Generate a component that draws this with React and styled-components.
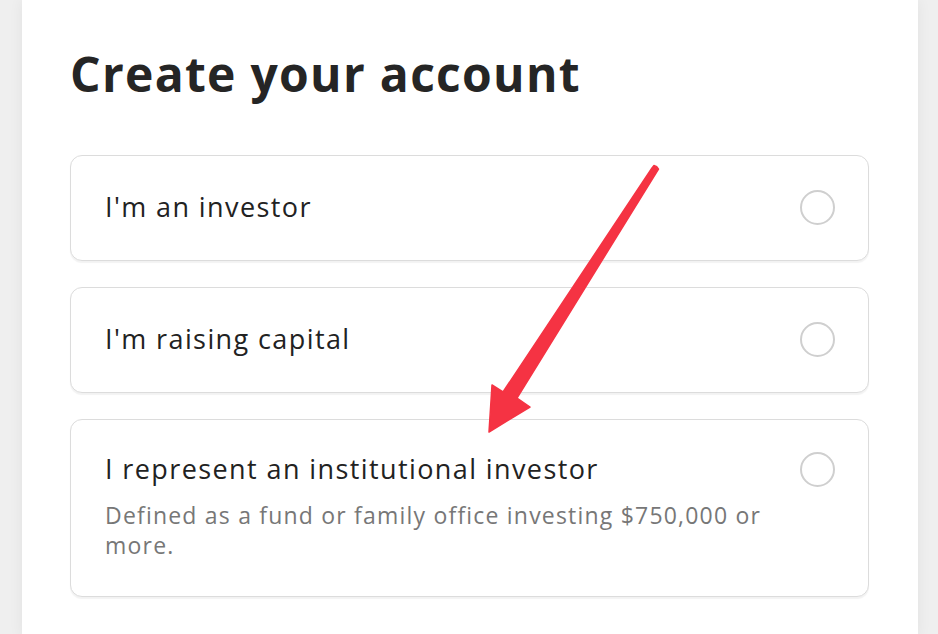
import React from 'react';
import styled, {createGlobalStyle} from 'styled-components';

const GlobalStyle = createGlobalStyle`
  html, body {
    margin: 0;
    padding: 0;
    background: #efefef;
  }
  body {
    font-family: "Open Sans", "Liberation Sans", sans-serif;
    color: #222;
  }
`;

const Page = styled.div`
  display: flex;
  justify-content: center;
  min-height: 634px;
  padding: 0 20px 0 22px;
  overflow: hidden;
`;

const Card = styled.div`
  position: relative;
  flex: 1;
  background: #fff;
  box-shadow: 0 0 14px rgba(0, 0, 0, 0.06);
  padding: 43px 49px 40px 48px;
`;

const Title = styled.h1`
  margin: 0 0 50px;
  font-size: 48px;
  font-weight: 700;
  line-height: 62px;
  color: #252525;
  letter-spacing: 1.3px;
`;

const OptionList = styled.div`
  display: flex;
  flex-direction: column;
  gap: 26px;
`;

const Option = styled.label`
  display: flex;
  align-items: flex-start;
  gap: 20px;
  min-height: ${props => props.$tall ? 178 : 106}px;
  box-sizing: border-box;
  padding: ${props => props.$tall ? '31px' : '33px'} 33px 24px 34px;
  border: 1.5px solid #dcdcdc;
  border-radius: 12px;
  box-shadow: 0 1.5px 1px rgba(0, 0, 0, 0.05);
  background: #fff;
  cursor: pointer;
`;

const OptionBody = styled.div`
  flex: 1;
  display: flex;
  flex-direction: column;
  gap: 13px;
`;

const OptionTitle = styled.div`
  font-size: 27px;
  line-height: 36px;
  letter-spacing: 1.4px;
  color: #222;
`;

const OptionNote = styled.div`
  font-size: 23px;
  line-height: 30px;
  letter-spacing: 1.2px;
  color: #777;
  max-width: 700px;
`;

const Radio = styled.span`
  flex: none;
  box-sizing: border-box;
  width: 35px;
  height: 35px;
  margin-top: 1px;
  border: 2px solid #cfcfcf;
  border-radius: 50%;
  background: #fff;
`;

const Arrow = styled.svg`
  position: absolute;
  left: 0;
  top: 0;
  pointer-events: none;
`;

const options = [
  {title: "I'm an investor"},
  {title: "I'm raising capital"},
  {
    title: 'I represent an institutional investor',
    note: 'Defined as a fund or family office investing $750,000 or more.'
  }
];

export default function App() {
  return (
    <Page>
      <GlobalStyle />
      <Card>
        <Title>Create your account</Title>
        <OptionList>
          {options.map(o => (
            <Option key={o.title} $tall={!!o.note}>
              <OptionBody>
                <OptionTitle>{o.title}</OptionTitle>
                {o.note && <OptionNote>{o.note}</OptionNote>}
              </OptionBody>
              <Radio />
            </Option>
          ))}
        </OptionList>
        {/* red annotation arrow, coords relative to card (card starts at x=22) */}
        <Arrow width="896" height="634" viewBox="0 0 896 634">
          <g transform="translate(-22 0)">
            <path
              d="M654 165.5 Q657 166 658.5 169 L517 398 L530 407 L489 432 L492 385 L503 392 L652 168 Z"
              fill="#f53343"
              stroke="#f53343"
              strokeWidth="1.5"
              strokeLinejoin="round"
            />
          </g>
        </Arrow>
      </Card>
    </Page>
  );
}
